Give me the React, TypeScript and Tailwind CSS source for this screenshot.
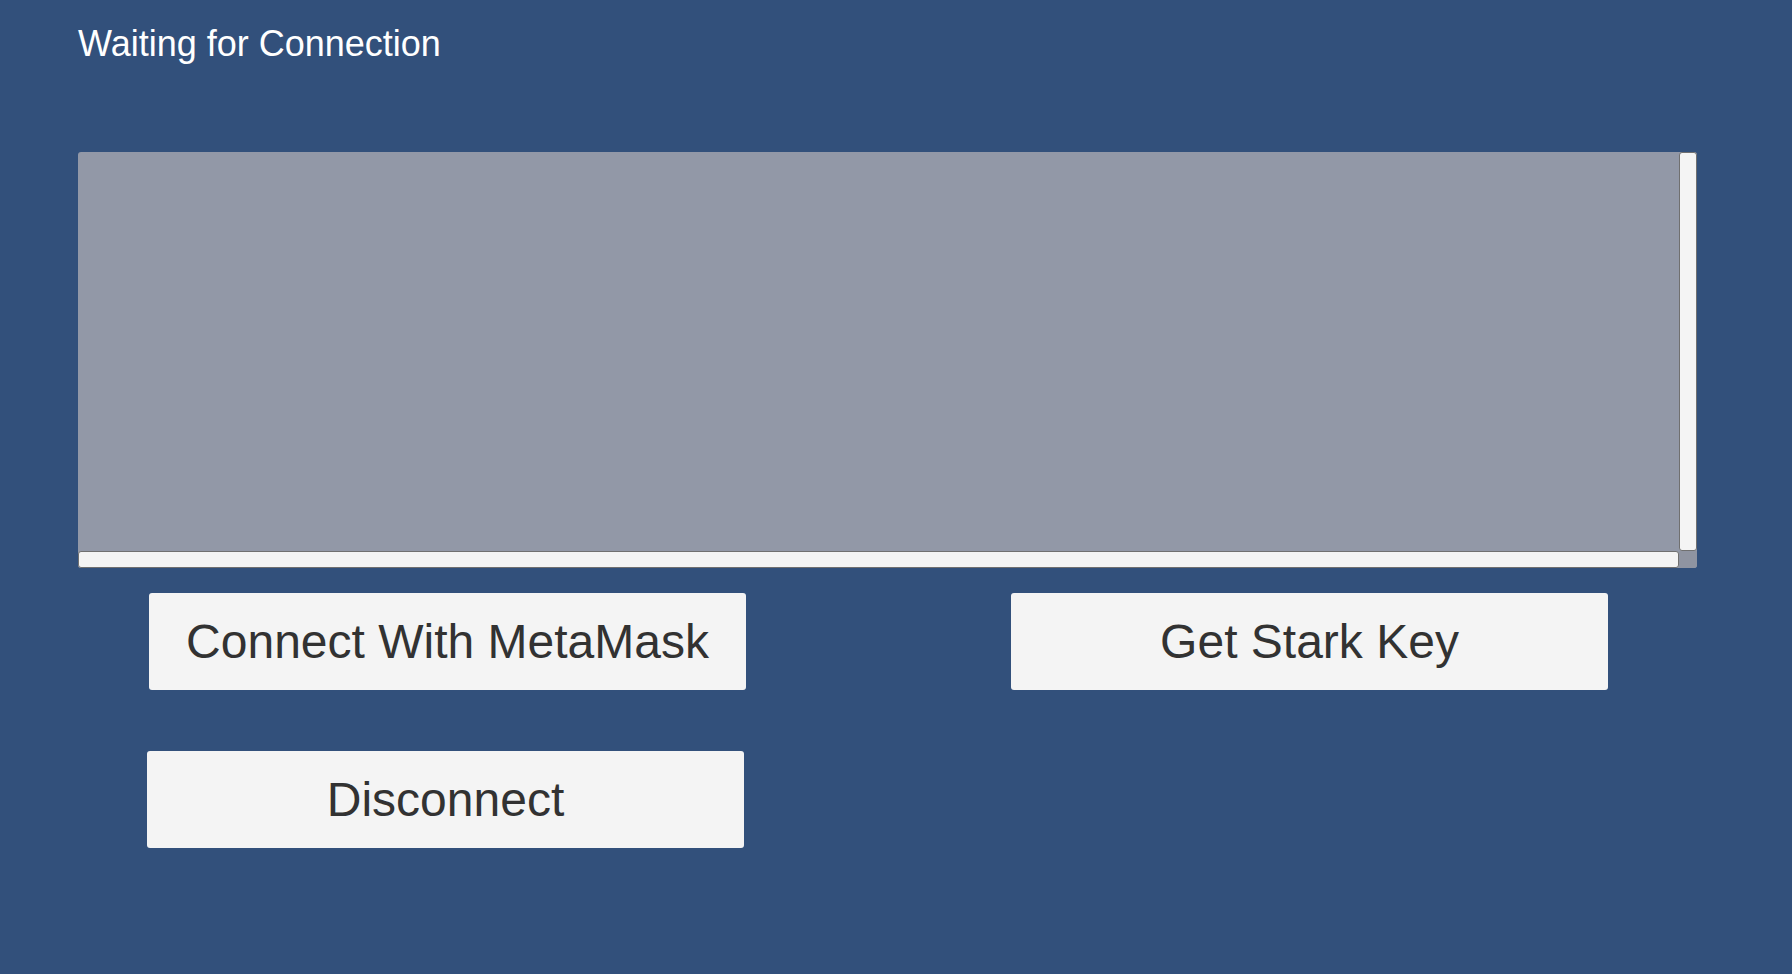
export default function App() {
  return (
    <div
      className="min-h-screen w-full bg-[#32507b] pl-[78px] pt-[26px]"
      style={{ fontFamily: '"Liberation Sans", Arial, sans-serif' }}
    >
      <h1 className="text-[36px] leading-[36px] text-white">Waiting for Connection</h1>

      <LogPanel />

      <div className="mt-[25px] flex gap-[265px] pl-[71px]">
        <ActionButton label="Connect With MetaMask" />
        <ActionButton label="Get Stark Key" />
      </div>

      <div className="mt-[61px] pl-[69px]">
        <ActionButton label="Disconnect" />
      </div>
    </div>
  );
}

function LogPanel() {
  return (
    <div className="mt-[90px] flex h-[416px] w-[1619px] flex-col rounded-[3px] bg-[#9298a7]">
      <div className="flex min-h-0 flex-1">
        <div className="flex-1 rounded-tl-[3px]" />
        <div className="w-[18px] rounded-[3px] border border-[#707070] bg-[#f4f4f4]" />
      </div>
      <div className="flex h-[17px]">
        <div className="flex-1 rounded-[3px] border border-[#707070] bg-[#f4f4f4]" />
        <div className="w-[18px] rounded-br-[3px] bg-[#8f94a1]" />
      </div>
    </div>
  );
}

function ActionButton({ label }: { label: string }) {
  return (
    <button className="flex h-[97px] w-[597px] items-center justify-center rounded-[3px] bg-[#f4f4f4] text-[48px] leading-[48px] text-[#323232]">
      {label}
    </button>
  );
}
